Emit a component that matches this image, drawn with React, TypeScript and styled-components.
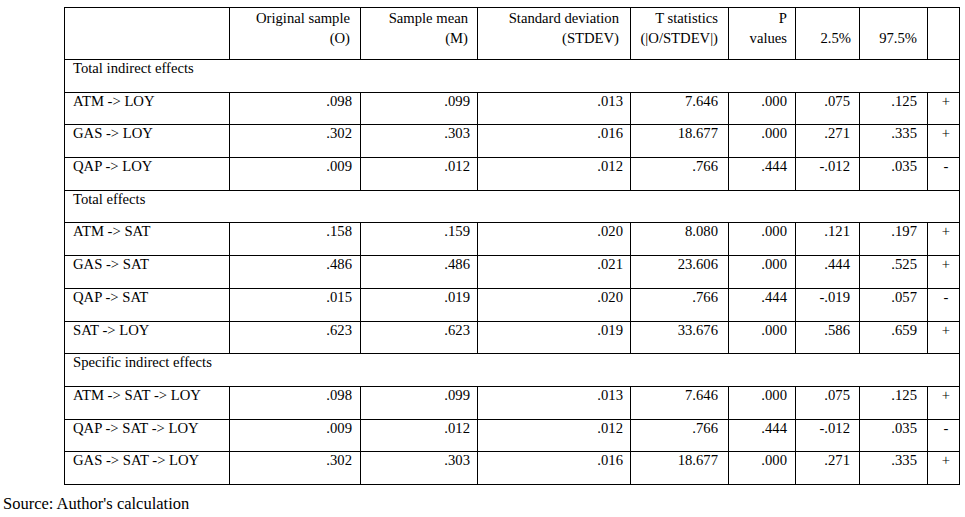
import styled, { createGlobalStyle } from "styled-components";

const serif = `"Liberation Serif", "Times New Roman", serif`;

const GlobalStyle = createGlobalStyle`
  html, body {
    margin: 0;
    padding: 0;
    background: #ffffff;
  }
  body {
    font-family: ${serif};
    color: #000000;
  }
`;

const Page = styled.div`
  width: 965px;
  height: 517px;
  padding: 7px 0 0 3px;
  box-sizing: border-box;
  overflow: hidden;
  font-family: ${serif};
`;

const Table = styled.table`
  margin-left: 61px;
  width: 896px;
  border-collapse: collapse;
  table-layout: fixed;
  font-family: ${serif};
  font-size: 14.67px;
  color: #000;
`;

const Col = styled.col<{ $w: number }>`
  width: ${({ $w }) => $w}px;
`;

const HeadRow = styled.tr`
  height: 52px;
`;

const HeadCell = styled.th<{ $pr: number }>`
  border: 1px solid #000;
  padding: 0 ${({ $pr }) => $pr}px 11px 0;
  text-align: right;
  vertical-align: bottom;
  font-weight: normal;
  line-height: 20px;
  white-space: nowrap;
`;

const Row = styled.tr`
  height: 32.7px;
`;

const SectionCell = styled.td`
  border: 1px solid #000;
  padding: 0 0 0 8px;
  text-align: left;
  vertical-align: top;
  line-height: 17px;
`;

const LabelCell = styled.td`
  border: 1px solid #000;
  padding: 0 0 0 8px;
  text-align: left;
  vertical-align: top;
  line-height: 17px;
  white-space: nowrap;
`;

const NumCell = styled.td<{ $pr: number }>`
  border: 1px solid #000;
  padding: 0 ${({ $pr }) => $pr}px 0 0;
  text-align: right;
  vertical-align: top;
  line-height: 17px;
  white-space: nowrap;
`;

const SignCell = styled.td`
  border: 1px solid #000;
  padding: 0 0 0 5px;
  text-align: center;
  vertical-align: top;
  line-height: 17px;
`;

const Source = styled.p`
  margin: 10px 0 0;
  font-family: ${serif};
  font-size: 16.5px;
  line-height: 18px;
`;

const widths = [165, 131, 117, 153, 98, 67, 64, 68, 32];
const headPad = [10, 9, 11, 10, 8, 8, 10];
const bodyPad = [8, 7, 7, 10, 8, 9, 10];

const headers: string[][] = [
  ["Original sample", "(O)"],
  ["Sample mean", "(M)"],
  ["Standard deviation", "(STDEV)"],
  ["T statistics", "(|O/STDEV|)"],
  ["P", "values"],
  ["2.5%"],
  ["97.5%"],
];

type DataRow = { label: string; values: string[]; sign: string };
type Section = { title: string; rows: DataRow[] };

const sections: Section[] = [
  {
    title: "Total indirect effects",
    rows: [
      { label: "ATM -> LOY", values: [".098", ".099", ".013", "7.646", ".000", ".075", ".125"], sign: "+" },
      { label: "GAS -> LOY", values: [".302", ".303", ".016", "18.677", ".000", ".271", ".335"], sign: "+" },
      { label: "QAP -> LOY", values: [".009", ".012", ".012", ".766", ".444", "-.012", ".035"], sign: "-" },
    ],
  },
  {
    title: "Total effects",
    rows: [
      { label: "ATM -> SAT", values: [".158", ".159", ".020", "8.080", ".000", ".121", ".197"], sign: "+" },
      { label: "GAS -> SAT", values: [".486", ".486", ".021", "23.606", ".000", ".444", ".525"], sign: "+" },
      { label: "QAP -> SAT", values: [".015", ".019", ".020", ".766", ".444", "-.019", ".057"], sign: "-" },
      { label: "SAT -> LOY", values: [".623", ".623", ".019", "33.676", ".000", ".586", ".659"], sign: "+" },
    ],
  },
  {
    title: "Specific indirect effects",
    rows: [
      { label: "ATM -> SAT -> LOY", values: [".098", ".099", ".013", "7.646", ".000", ".075", ".125"], sign: "+" },
      { label: "QAP -> SAT -> LOY", values: [".009", ".012", ".012", ".766", ".444", "-.012", ".035"], sign: "-" },
      { label: "GAS -> SAT -> LOY", values: [".302", ".303", ".016", "18.677", ".000", ".271", ".335"], sign: "+" },
    ],
  },
];

const App = () => {
  return (
    <>
      <GlobalStyle />
      <Page>
        <Table>
          <colgroup>
            {widths.map((w, i) => (
              <Col key={i} $w={w} />
            ))}
          </colgroup>
          <thead>
            <HeadRow>
              <HeadCell $pr={0} />
              {headers.map((lines, i) => (
                <HeadCell key={i} $pr={headPad[i]}>
                  {lines.map((line, j) => (
                    <div key={j}>{line}</div>
                  ))}
                </HeadCell>
              ))}
              <HeadCell $pr={0} />
            </HeadRow>
          </thead>
          <tbody>
            {sections.map((section) => (
              <>
                <Row key={section.title}>
                  <SectionCell colSpan={9}>{section.title}</SectionCell>
                </Row>
                {section.rows.map((row) => (
                  <Row key={section.title + row.label}>
                    <LabelCell>{row.label}</LabelCell>
                    {row.values.map((v, i) => (
                      <NumCell key={i} $pr={bodyPad[i]}>
                        {v}
                      </NumCell>
                    ))}
                    <SignCell>{row.sign}</SignCell>
                  </Row>
                ))}
              </>
            ))}
          </tbody>
        </Table>
        <Source>Source: Author's calculation</Source>
      </Page>
    </>
  );
};

export default App;
